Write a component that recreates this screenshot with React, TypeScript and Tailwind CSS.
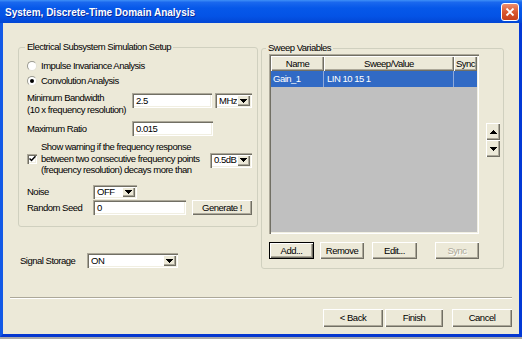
import React from "react";

const raised =
  "bg-[#ECE9D8] shadow-[inset_1px_1px_0_#ffffff,inset_-1px_-1px_0_#716F64,inset_-2px_-2px_0_#ACA899]";
const defRaised =
  "bg-[#ECE9D8] border border-black shadow-[inset_1px_1px_0_#ffffff,inset_-1px_-1px_0_#716F64,inset_-2px_-2px_0_#ACA899]";
const sunken =
  "shadow-[inset_1px_1px_0_#ACA899,inset_2px_2px_0_#716F64,inset_-1px_-1px_0_#ffffff,inset_-2px_-2px_0_#F1EFE2]";

function Tri({ up = false }: { up?: boolean }) {
  return (
    <svg width="7" height="4" viewBox="0 0 7 4" shapeRendering="crispEdges">
      <path
        d={
          up
            ? "M3 0h1v1h1v1h1v1h1v1H0V3h1V2h1V1h1z"
            : "M0 0h7v1h-1v1h-1v1h-1v1h-1V3H2V2H1V1H0z"
        }
        fill="#000"
      />
    </svg>
  );
}

function Field({ w, h, children }: { w: string; h: string; children: React.ReactNode }) {
  return (
    <div className={`${w} ${h} bg-white ${sunken} flex items-center pl-[4px] shrink-0`}>
      {children}
    </div>
  );
}

function Combo({
  w,
  h,
  children,
  className = "",
}: {
  w: string;
  h: string;
  children: React.ReactNode;
  className?: string;
}) {
  return (
    <div className={`${w} ${h} bg-white ${sunken} flex shrink-0 ${className}`}>
      <div className="flex-1 flex items-center pl-[4px]">{children}</div>
      <div className={`my-[2px] mr-[2px] w-[13px] ${raised} flex items-center justify-center`}>
        <Tri />
      </div>
    </div>
  );
}

function Btn({
  w,
  h = "h-[17px]",
  children,
  def = false,
  disabled = false,
  className = "",
}: {
  w: string;
  h?: string;
  children: React.ReactNode;
  def?: boolean;
  disabled?: boolean;
  className?: string;
}) {
  return (
    <div
      className={`${w} ${h} ${def ? defRaised : raised} flex items-center justify-center shrink-0 ${
        disabled ? "text-[#ACA899] [text-shadow:1px_1px_0_#ffffff]" : "text-black"
      } ${className}`}
    >
      {children}
    </div>
  );
}

function Radio({ checked = false }: { checked?: boolean }) {
  return (
    <div className="w-[10px] h-[10px] rounded-full bg-white border border-t-[#9a9a90] border-l-[#9a9a90] border-r-[#e4e2d6] border-b-[#e4e2d6] flex items-center justify-center shrink-0">
      {checked && <div className="w-[4px] h-[4px] rounded-full bg-black" />}
    </div>
  );
}

function Check() {
  return (
    <div className={`w-[10px] h-[10px] bg-white ${sunken} flex items-center justify-center shrink-0`}>
      <svg width="7" height="7" viewBox="0 0 7 7">
        <path d="M0.5 3.5 L2.5 5.5 L6.5 1.2" stroke="#000" strokeWidth="1.5" fill="none" />
      </svg>
    </div>
  );
}

export default function App() {
  return (
    <div className="w-[522px] h-[339px] bg-[#a9a9a9] font-['Liberation_Sans',Arial,sans-serif] text-[9.5px] leading-[12px] tracking-[-0.5px] text-black text-left overflow-hidden">
      <div className="h-[337px] flex flex-col">
        {/* Title bar */}
        <div className="h-[23px] flex items-center justify-between pl-[5px] pr-[3px] pt-[2px] bg-[linear-gradient(to_bottom,#3f90f7_0%,#1a68ee_10%,#0658e9_35%,#0453e6_70%,#0246d4_100%)]">
          <span className="text-white font-bold text-[10px] tracking-normal [text-shadow:1px_1px_0_#0a2a9a]">
            System, Discrete-Time Domain Analysis
          </span>
          <div className="w-[18px] h-[18px] -mt-[1px] rounded-[3px] border border-white bg-[linear-gradient(to_bottom,#ec8e70_0%,#d9582f_50%,#c6401b_100%)] flex items-center justify-center">
            <svg width="10" height="10" viewBox="0 0 10 10">
              <path d="M1.5 1.5 L8.5 8.5 M8.5 1.5 L1.5 8.5" stroke="#fff" strokeWidth="1.8" />
            </svg>
          </div>
        </div>

        {/* Window frame + body */}
        <div className="flex-1 flex flex-col border-l-[3px] border-r-[3px] border-b-[3px] border-l-[#1259e6] border-r-[#0339d6] border-b-[#0537d0]">
          <div className="flex-1 bg-[#ECE9D8] flex flex-col">
            <div className="flex pl-[15px] pt-[18px]">
              {/* Left column */}
              <div className="w-[240px] flex flex-col shrink-0">
                <fieldset className="h-[186px] border border-[#D0D0BF] rounded-[3px] p-0 m-0">
                  <legend className="ml-[6px] px-[2px] leading-[12px]">
                    Electrical Subsystem Simulation Setup
                  </legend>
                  <div className="pl-[8px] flex flex-col text-left">
                    <div className="flex items-center h-[12px] mt-[7px]">
                      <Radio />
                      <span className="ml-[4px]">Impulse Invariance Analysis</span>
                    </div>
                    <div className="flex items-center h-[12px] mt-[3px]">
                      <Radio checked />
                      <span className="ml-[4px]">Convolution Analysis</span>
                    </div>
                    <div className="flex mt-[6px] h-[23px]">
                      <div className="w-[105px] shrink-0 leading-[12px] -mt-[1px]">
                        <div>Minimum Bandwidth</div>
                        <div>(10 x frequency resolution)</div>
                      </div>
                      <Field w="w-[80px]" h="h-[15px]">2.5</Field>
                      <Combo w="w-[37px]" h="h-[15px]" className="ml-[3px]">
                        MHz
                      </Combo>
                    </div>
                    <div className="flex items-center mt-[5px] h-[15px]">
                      <div className="w-[105px] shrink-0">Maximum Ratio</div>
                      <Field w="w-[81px]" h="h-[15px]">0.015</Field>
                    </div>
                    <div className="flex items-center mt-[5px] h-[35px]">
                      <Check />
                      <div className="ml-[4px] w-[169px] shrink-0 leading-[11.5px] flex flex-col items-start text-left">
                        <span>Show warning if the frequency response</span>
                        <span>between two consecutive frequency points</span>
                        <span>(frequency resolution) decays more than</span>
                      </div>
                      <Combo w="w-[42px]" h="h-[15px]" className="mt-[3px]">
                        0.5dB
                      </Combo>
                    </div>
                    <div className="flex items-center mt-[9px] h-[14px]">
                      <div className="w-[66px] shrink-0">Noise</div>
                      <Combo w="w-[44px]" h="h-[14px]">OFF</Combo>
                    </div>
                    <div className="flex items-center mt-[1px] h-[15px]">
                      <div className="w-[66px] shrink-0">Random Seed</div>
                      <Field w="w-[93px]" h="h-[15px]">0</Field>
                      <Btn w="w-[60px]" h="h-[15px]" className="ml-[6px]">
                        Generate !
                      </Btn>
                    </div>
                  </div>
                </fieldset>
                <div className="flex items-center mt-[26px] h-[15px] pl-[2px]">
                  <div className="w-[67px] shrink-0">Signal Storage</div>
                  <Combo w="w-[91px]" h="h-[15px]">ON</Combo>
                </div>
              </div>

              {/* Right group */}
              <fieldset className="w-[243px] h-[227px] mt-[1px] ml-[3px] border border-[#D0D0BF] rounded-[3px] p-0 m-0 shrink-0">
                <legend className="ml-[4px] px-[2px] leading-[12px]">Sweep Variables</legend>
                <div className="flex pl-[7px]">
                  <div className={`w-[210px] h-[180px] bg-[#C0C0C0] p-[2px] ${sunken} flex flex-col shrink-0`}>
                    <div className="flex h-[15px]">
                      <div className={`w-[53px] ${raised} flex items-center justify-center`}>Name</div>
                      <div className={`w-[130px] ${raised} flex items-center justify-center`}>Sweep/Value</div>
                      <div className={`w-[23px] ${raised} flex items-center justify-center`}>Sync</div>
                    </div>
                    <div className="flex h-[16px] bg-[#316AC5] text-white">
                      <div className="w-[53px] pl-[2px] flex items-center border-r border-[#8fa9d8]">Gain_1</div>
                      <div className="w-[130px] pl-[3px] flex items-center border-r border-[#8fa9d8]">LIN 10 15 1</div>
                      <div className="w-[23px]" />
                    </div>
                  </div>
                  <div className="ml-[7px] mt-[69px] flex flex-col">
                    <Btn w="w-[14px]" h="h-[17px]">
                      <Tri up />
                    </Btn>
                    <Btn w="w-[14px]" h="h-[17px]">
                      <Tri />
                    </Btn>
                  </div>
                </div>
                <div className="flex pl-[7px] mt-[8px]">
                  <Btn w="w-[45px]" h="h-[17px]" def>
                    Add...
                  </Btn>
                  <Btn w="w-[44px]" h="h-[17px]" className="ml-[6px]">
                    Remove
                  </Btn>
                  <Btn w="w-[45px]" h="h-[17px]" className="ml-[8px]">
                    Edit...
                  </Btn>
                  <Btn w="w-[44px]" h="h-[17px]" className="ml-[18px]" disabled>
                    Sync
                  </Btn>
                </div>
              </fieldset>
            </div>

            {/* Separator */}
            <div className="mt-[28px] mx-[7px] h-[2px] border-t border-t-[#ACA899] border-b border-b-white" />

            {/* Bottom buttons */}
            <div className="flex justify-end pr-[7px] mt-[10px]">
              <Btn w="w-[60px]" h="h-[18px]">
                &lt; Back
              </Btn>
              <Btn w="w-[58px]" h="h-[18px]" className="ml-[2px]">
                Finish
              </Btn>
              <Btn w="w-[60px]" h="h-[18px]" className="ml-[9px]">
                Cancel
              </Btn>
            </div>
          </div>
        </div>
      </div>
    </div>
  );
}
